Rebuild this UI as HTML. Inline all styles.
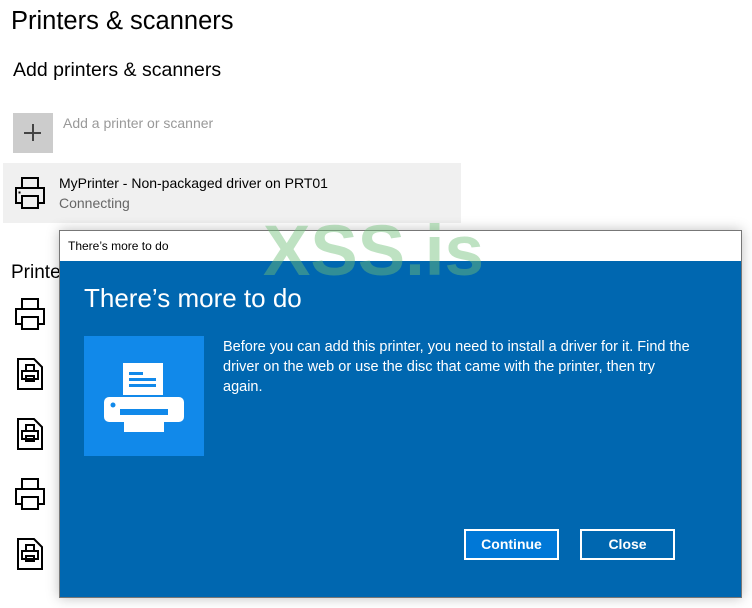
<!DOCTYPE html>
<html><head><meta charset="utf-8"><style>
body{margin:0;width:752px;height:608px;background:#fff;position:relative;overflow:hidden;font-family:"Segoe UI","Liberation Sans",sans-serif;}
.a{position:absolute;}
</style></head><body>
<div class="a" style="left:11px;top:7px;font-size:25.5px;color:#000;">Printers &amp; scanners</div>
<div class="a" style="left:13px;top:59px;font-size:19.5px;color:#000;">Add printers &amp; scanners</div>
<div class="a" style="left:13px;top:113px;width:40px;height:40px;background:#ccc;"></div>
<div class="a" style="left:24px;top:132px;width:17px;height:1.5px;background:#444;"></div>
<div class="a" style="left:32px;top:124px;width:1.5px;height:17px;background:#444;"></div>
<div class="a" style="left:63px;top:115px;font-size:14px;color:#999;">Add a printer or scanner</div>
<div class="a" style="left:3px;top:163px;width:458px;height:60px;background:#f0f0f0;"></div>
<svg class="a" style="left:14px;top:176px" width="34" height="34" viewBox="0 0 34 34" fill="none" stroke="#000" stroke-width="2"><rect x="8" y="2" width="16" height="10"/><path d="M8 27H2V12H30V27H24"/><rect x="8" y="20" width="16" height="12"/><rect x="5" y="16" width="1" height="1" fill="#000" stroke-width="1"/></svg>
<div class="a" style="left:59px;top:175px;font-size:14px;color:#000;">MyPrinter - Non-packaged driver on PRT01</div>
<div class="a" style="left:59px;top:195px;font-size:14px;color:#666;">Connecting</div>
<div class="a" style="left:11px;top:262px;font-size:19px;color:#000;">Printers</div>
<svg class="a" style="left:14px;top:297px" width="34" height="34" viewBox="0 0 34 34" fill="none" stroke="#000" stroke-width="2"><rect x="8" y="2" width="16" height="10"/><path d="M8 27H2V12H30V27H24"/><rect x="8" y="20" width="16" height="12"/></svg>
<svg class="a" style="left:14px;top:477px" width="34" height="34" viewBox="0 0 34 34" fill="none" stroke="#000" stroke-width="2"><rect x="8" y="2" width="16" height="10"/><path d="M8 27H2V12H30V27H24"/><rect x="8" y="20" width="16" height="12"/></svg>
<svg class="a" style="left:16px;top:357px" width="28" height="34" viewBox="0 0 28 34" fill="none" stroke="#000" stroke-width="2"><path d="M2 2H18L26 10V32H2Z"/><rect x="10" y="8" width="8" height="6"/><rect x="6" y="14" width="16" height="8"/><rect x="10" y="19" width="8" height="5"/></svg>
<svg class="a" style="left:16px;top:417px" width="28" height="34" viewBox="0 0 28 34" fill="none" stroke="#000" stroke-width="2"><path d="M2 2H18L26 10V32H2Z"/><rect x="10" y="8" width="8" height="6"/><rect x="6" y="14" width="16" height="8"/><rect x="10" y="19" width="8" height="5"/></svg>
<svg class="a" style="left:16px;top:537px" width="28" height="34" viewBox="0 0 28 34" fill="none" stroke="#000" stroke-width="2"><path d="M2 2H18L26 10V32H2Z"/><rect x="10" y="8" width="8" height="6"/><rect x="6" y="14" width="16" height="8"/><rect x="10" y="19" width="8" height="5"/></svg>

<div class="a" style="left:59px;top:230px;width:681px;height:366px;border:1px solid #777;background:#0067b0;box-shadow:0 0 12px rgba(0,0,0,0.25);">
 <div style="height:30px;background:#fff;font-size:12px;line-height:30px;padding-left:8px;color:#000;">There’s more to do</div>
 <div class="a" style="left:24px;top:52px;font-size:26px;color:#fff;font-weight:300;">There’s more to do</div>
 <div class="a" style="left:24px;top:105px;width:120px;height:120px;background:#1189ea;">
  <svg width="120" height="120" viewBox="0 0 120 120"><rect x="39" y="27" width="40" height="32" fill="#fff"/><rect x="45" y="36" width="14" height="3" fill="#1189ea"/><rect x="45" y="42" width="27" height="3" fill="#1189ea"/><rect x="45" y="48" width="27" height="3" fill="#1189ea"/><rect x="20" y="61" width="80" height="25" rx="5" fill="#fff"/><circle cx="29" cy="69" r="2.5" fill="#1189ea"/><rect x="36" y="73" width="48" height="6" fill="#1189ea"/><rect x="40" y="79" width="40" height="17" fill="#fff"/></svg>
 </div>
 <div class="a" style="left:163px;top:106px;white-space:nowrap;font-size:14.5px;line-height:20px;color:#fff;">Before you can add this printer, you need to install a driver for it. Find the<br>driver on the web or use the disc that came with the printer, then try<br>again.</div>
 <div class="a" style="left:404px;top:298px;width:91px;height:27px;border:2px solid #fff;background:#0078d7;color:#fff;font-size:14px;font-weight:bold;text-align:center;line-height:27px;">Continue</div>
 <div class="a" style="left:520px;top:298px;width:91px;height:27px;border:2px solid #fff;color:#fff;font-size:14px;font-weight:bold;text-align:center;line-height:27px;">Close</div>
</div>
<div class="a" style="left:263px;top:211px;font-size:71px;font-weight:bold;color:rgba(110,190,120,0.45);font-family:'Liberation Sans',sans-serif;">XSS.is</div>
</body></html>
